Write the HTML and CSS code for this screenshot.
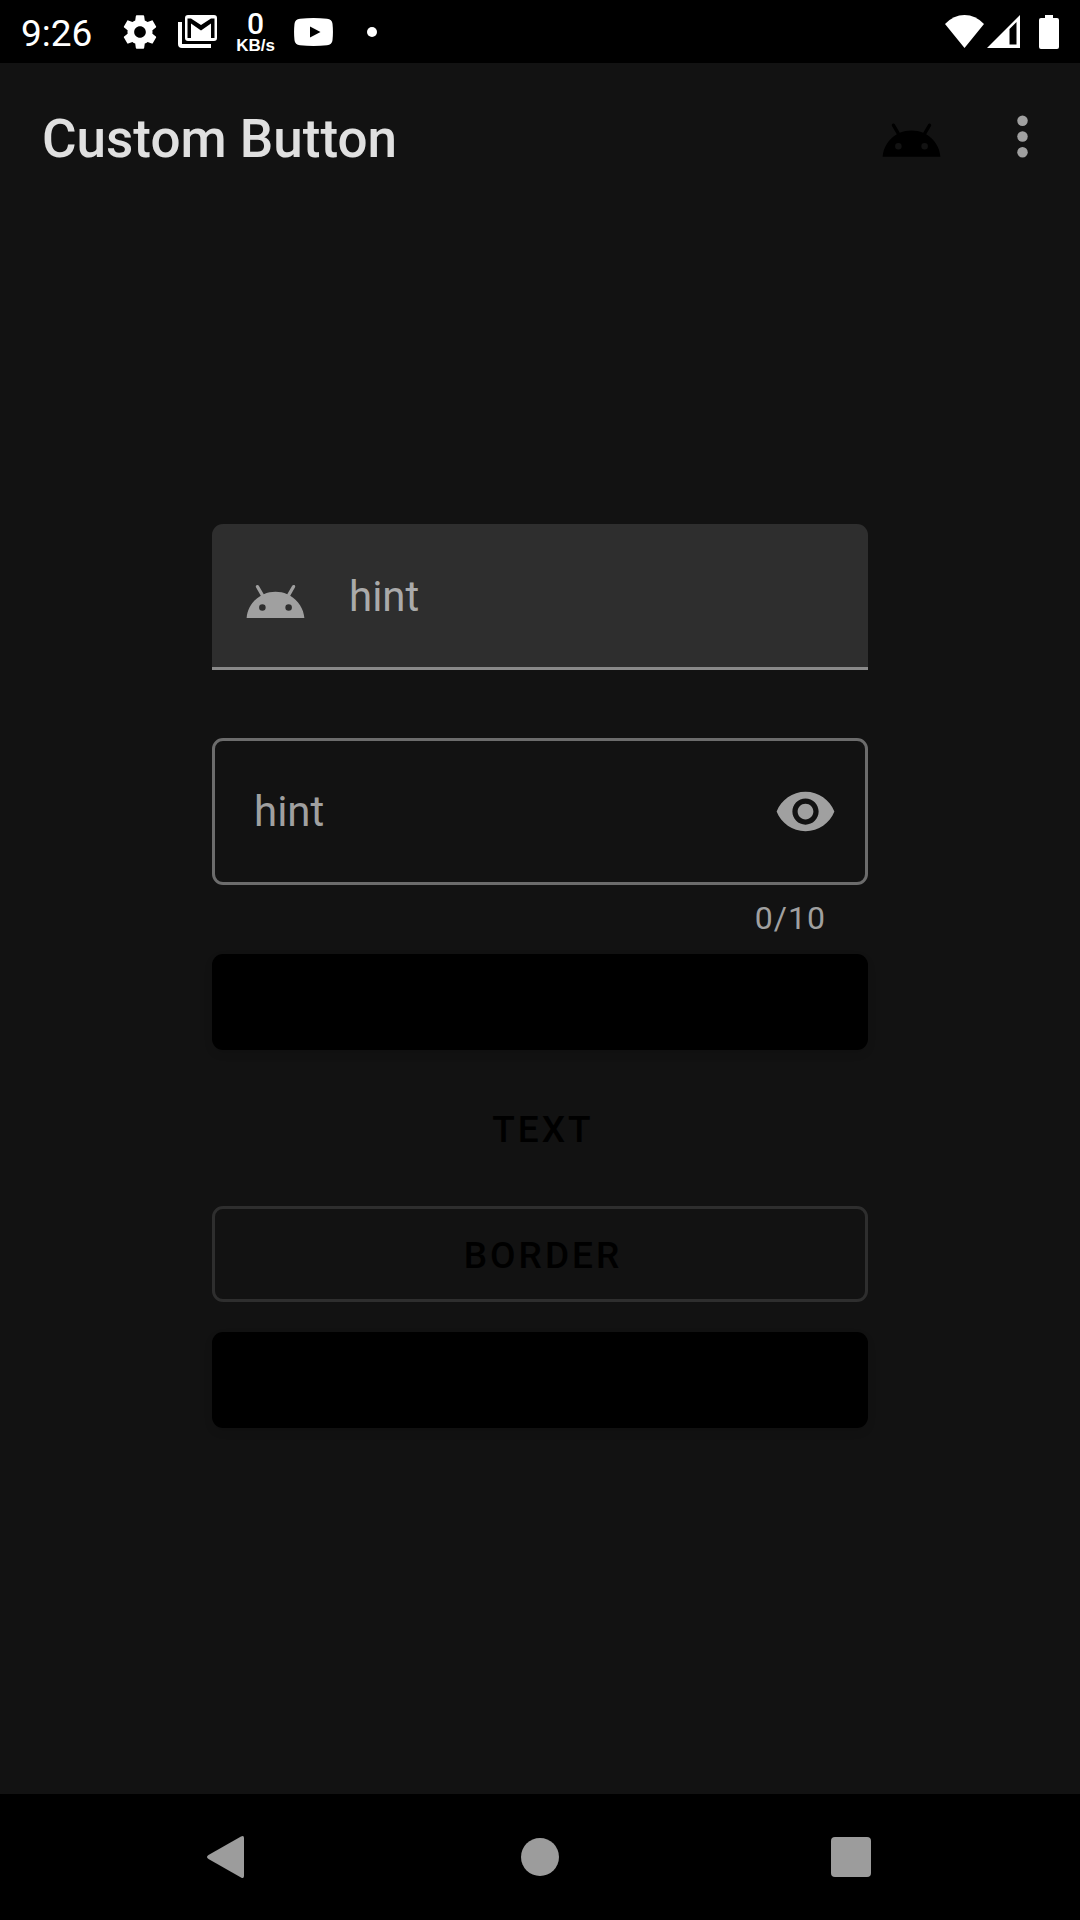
FILE: index.html
```html
<!DOCTYPE html>
<html lang="en">
<head>
<meta charset="utf-8">
<meta name="viewport" content="width=device-width, initial-scale=1">
<title>Custom Button</title>
<link rel="stylesheet" href="styles.css">
</head>
<body>
<div class="screen">
  <div class="status-bar">
    <div class="status-left">
      <time class="clock">9:26</time>
      <svg class="gear" viewBox="0 0 24 24" aria-hidden="true"><path d="M19.43 12.98c.04-.32.07-.64.07-.98s-.03-.66-.07-.98l2.11-1.65c.19-.15.24-.42.12-.64l-2-3.46c-.12-.22-.39-.3-.61-.22l-2.49 1c-.52-.4-1.08-.73-1.69-.98l-.38-2.65C14.46 2.18 14.25 2 14 2h-4c-.25 0-.46.18-.49.42l-.38 2.65c-.61.25-1.17.59-1.69.98l-2.49-1c-.23-.09-.49 0-.61.22l-2 3.46c-.13.22-.07.49.12.64l2.11 1.65c-.04.32-.07.65-.07.98s.03.66.07.98l-2.11 1.65c-.19.15-.24.42-.12.64l2 3.46c.12.22.39.3.61.22l2.49-1c.52.4 1.08.73 1.69.98l.38 2.65c.03.24.24.42.49.42h4c.25 0 .46-.18.49-.42l.38-2.65c.61-.25 1.17-.59 1.69-.98l2.49 1c.23.09.49 0 .61-.22l2-3.46c.12-.22.07-.49-.12-.64l-2.11-1.65zM12 15.5c-1.93 0-3.5-1.57-3.5-3.5s1.57-3.5 3.5-3.5 3.5 1.57 3.5 3.5-1.57 3.5-3.5 3.5z"/></svg>
      <svg class="mail" viewBox="0 0 39 33" aria-hidden="true"><path d="M0 7h4v22h29v4H4q-4 0-4-4z"/><path fill-rule="evenodd" d="M10 0h26q3 0 3 3v20q0 3-3 3H10q-3 0-3-3V3q0-3 3-3zM9.500 3.500H13L23 10l10-6.500h3.500V23H33V8.500l-10 7-10-7V23H9.500z"/></svg>
      <div class="net-speed"><span class="net-value">0</span><span class="net-unit">KB/s</span></div>
      <svg class="video" viewBox="0 0 39 28" aria-hidden="true"><path fill-rule="evenodd" d="M6 .7Q19.500-.5 33 .7q5 .3 5.500 5 .9 8.300 0 16.600-.5 4.700-5.500 5-13.500 1.200-27 0-5-.3-5.500-5-.9-8.300 0-16.600Q1 1 6 .7zM16 8.500v11l10.500-5.500z"/></svg>
      <svg class="more-dot" viewBox="0 0 10 10" aria-hidden="true"><circle cx="5" cy="5" r="5"/></svg>
    </div>
    <div class="status-right">
      <svg class="wifi" viewBox="0 0 39 33" aria-hidden="true"><path d="M0 9Q8.500 0 19.500 0T39 9L19.500 33z"/></svg>
      <svg class="signal" viewBox="0 0 33 33" aria-hidden="true"><path fill-rule="evenodd" d="M0 33L33 0v33zM22.500 14v15.500h7V7z"/></svg>
      <svg class="battery" viewBox="0 0 20 34" aria-hidden="true"><path d="M6 0h8v3h4q2 0 2 2v27q0 2-2 2H2q-2 0-2-2V5q0-2 2-2h4z"/></svg>
    </div>
  </div>

  <header class="app-bar">
    <h1 class="app-title">Custom Button</h1>
    <button class="icon-button icon-button-black" type="button" aria-label="Android">
      <svg class="icon" viewBox="0 -1.700 24 24" aria-hidden="true"><path d="M17.600 9.480l1.840-3.180c.16-.31.04-.69-.26-.85-.29-.15-.65-.06-.83.22l-1.880 3.240c-2.860-1.210-6.080-1.210-8.940 0L5.650 5.670c-.19-.29-.58-.38-.87-.2-.28.18-.37.54-.22.83L6.400 9.480C3.300 11.250 1.280 14.440 1 18h22c-.28-3.560-2.300-6.750-5.400-8.520zM7 15.250a1.250 1.250 0 1 1 0-2.500 1.250 1.250 0 0 1 0 2.500zm10 0a1.250 1.250 0 1 1 0-2.500 1.250 1.250 0 0 1 0 2.500z"/></svg>
    </button>
    <button class="icon-button" type="button" aria-label="More options">
      <svg class="icon" viewBox="0 0 24 24" aria-hidden="true"><circle cx="12" cy="6" r="2"/><circle cx="12" cy="12" r="2"/><circle cx="12" cy="18" r="2"/></svg>
    </button>
  </header>

  <main class="content">
    <form class="form">
      <div class="field field-filled">
        <svg class="icon" viewBox="0 -2.200 24 24" aria-hidden="true"><path d="M17.600 9.480l1.840-3.180c.16-.31.04-.69-.26-.85-.29-.15-.65-.06-.83.22l-1.880 3.240c-2.860-1.210-6.080-1.210-8.940 0L5.650 5.670c-.19-.29-.58-.38-.87-.2-.28.18-.37.54-.22.83L6.400 9.480C3.300 11.250 1.280 14.440 1 18h22c-.28-3.560-2.300-6.750-5.400-8.520zM7 15.250a1.250 1.250 0 1 1 0-2.500 1.250 1.250 0 0 1 0 2.500zm10 0a1.250 1.250 0 1 1 0-2.500 1.250 1.250 0 0 1 0 2.500z"/></svg>
        <input class="field-input" type="text" placeholder="hint" aria-label="hint">
      </div>
      <div class="field field-outlined">
        <input class="field-input" type="password" maxlength="10" placeholder="hint" aria-label="hint" aria-describedby="counter">
        <button class="icon-button" type="button" aria-label="Show password">
          <svg class="icon" viewBox="0 0 24 24" aria-hidden="true"><path d="M12 4.500C7 4.500 2.730 7.610 1 12c1.730 4.390 6 7.500 11 7.500s9.270-3.110 11-7.500c-1.730-4.390-6-7.500-11-7.500zM12 17c-2.760 0-5-2.240-5-5s2.240-5 5-5 5 2.240 5 5-2.240 5-5 5zm0-8c-1.660 0-3 1.340-3 3s1.340 3 3 3 3-1.340 3-3-1.340-3-3-3z"/></svg>
        </button>
      </div>
      <div class="counter" id="counter">0/10</div>
      <div class="actions">
        <button class="button button-contained" type="button" aria-label="Contained"></button>
        <button class="button" type="button">TEXT</button>
        <button class="button button-outlined" type="button">BORDER</button>
        <button class="button button-contained" type="button" aria-label="Submit"></button>
      </div>
    </form>
  </main>

  <nav class="nav-bar">
    <button class="nav-button" type="button" aria-label="Back">
      <svg class="nav-icon" viewBox="0 0 44 44" aria-hidden="true"><path d="M34 1.500q3-1.500 3 1.500v38q0 3-3 1.500L1.500 24q-3-2 0-4z"/></svg>
    </button>
    <button class="nav-button" type="button" aria-label="Home">
      <svg class="nav-icon" viewBox="0 0 44 44" aria-hidden="true"><circle cx="22" cy="22" r="19"/></svg>
    </button>
    <button class="nav-button" type="button" aria-label="Recents">
      <svg class="nav-icon" viewBox="0 0 44 44" aria-hidden="true"><rect x="2" y="2" width="40" height="40" rx="4"/></svg>
    </button>
  </nav>
</div>
</body>
</html>
```
FILE: styles.css
```css
* {
  box-sizing: border-box;
}

body {
  margin: 0;
  background: #121212;
  color: #e0e0e0;
  font-family: Roboto, "Liberation Sans", sans-serif;
}

svg {
  display: block;
  flex: none;
  fill: currentColor;
}

button {
  margin: 0;
  padding: 0;
  border: 0;
  background: none;
  color: inherit;
  font: inherit;
}

.screen {
  display: flex;
  flex-direction: column;
  min-height: 100vh;
}

/* Status bar */

.status-bar {
  display: flex;
  align-items: center;
  justify-content: space-between;
  height: 63px;
  padding: 0 21px;
  background: #000;
  color: #fff;
}

.status-left,
.status-right {
  display: flex;
  align-items: center;
}

.clock {
  width: 99px;
  font-size: 37px;
  line-height: 44px;
  padding-top: 4px;
}

.gear {
  width: 40px;
  height: 40px;
  margin-right: 18px;
}

.mail {
  width: 39px;
  height: 33px;
}

.net-speed {
  display: flex;
  flex-direction: column;
  align-items: center;
  width: 77px;
}

.net-value {
  font-size: 30px;
  font-weight: 500;
  line-height: 28px;
}

.net-unit {
  font-family: "Liberation Sans", sans-serif;
  font-size: 17px;
  font-weight: 700;
  line-height: 16px;
}

.video {
  width: 39px;
  height: 28px;
}

.more-dot {
  width: 10px;
  height: 10px;
  margin-left: 34px;
}

.wifi {
  width: 39px;
  height: 33px;
}

.signal {
  width: 33px;
  height: 33px;
  margin: 0 19px 0 3px;
}

.battery {
  width: 20px;
  height: 34px;
}

/* App bar */

.app-bar {
  display: flex;
  align-items: center;
  gap: 48px;
  height: 147px;
  padding: 0 26px 0 42px;
}

.app-title {
  flex: 1;
  margin: 0;
  padding-top: 4px;
  font-size: 53px;
  font-weight: 500;
  line-height: 62px;
}

.icon-button {
  flex: none;
  color: #a0a0a0;
}

.icon-button-black {
  color: #000;
}

.icon {
  width: 63px;
  height: 63px;
}

/* Form */

.content {
  flex: 1;
  display: flex;
  flex-direction: column;
  align-items: center;
  justify-content: center;
  padding: 0 42px 52px;
}

.form {
  width: 100%;
  max-width: 656px;
}

.field {
  display: flex;
  align-items: center;
  height: 147px;
  color: #a0a0a0;
}

.field-filled {
  gap: 42px;
  height: 146px;
  margin-bottom: 68px;
  padding: 2px 32px 0;
  border-bottom: 3px solid #898989;
  border-radius: 11px 11px 0 0;
  background: #2e2e2e;
}

.field-outlined {
  padding: 0 28px 0 39px;
  border: 3px solid #6c6c6c;
  border-radius: 11px;
}

.field-input {
  flex: 1;
  min-width: 0;
  padding: 0;
  border: 0;
  outline: 0;
  background: none;
  color: #e0e0e0;
  font: inherit;
  font-size: 42px;
  line-height: 50px;
}

.field-input::placeholder {
  color: #a0a0a0;
  opacity: 1;
}

.field-filled .field-input::placeholder {
  color: #aaa;
}

.counter {
  height: 69px;
  padding: 14px 42px 0;
  color: #a0a0a0;
  font-size: 32px;
  letter-spacing: 1px;
  line-height: 38px;
  text-align: right;
}

.actions {
  display: grid;
  gap: 30px;
}

.button {
  height: 96px;
  padding: 2px 0 0 6px;
  border-radius: 11px;
  color: #000;
  font-size: 37px;
  font-weight: 500;
  letter-spacing: 3px;
}

.button-contained {
  background: #000;
  box-shadow: 0 4px 8px rgba(0, 0, 0, 0.1);
}

.button-outlined {
  border: 3px solid #2e2e2e;
}

/* System navigation */

.nav-bar {
  display: flex;
  justify-content: center;
  gap: 185px;
  height: 126px;
  background: #000;
  color: #9c9c9c;
}

.nav-button {
  display: grid;
  place-items: center;
  width: 126px;
}

.nav-icon {
  width: 44px;
  height: 44px;
}
```
